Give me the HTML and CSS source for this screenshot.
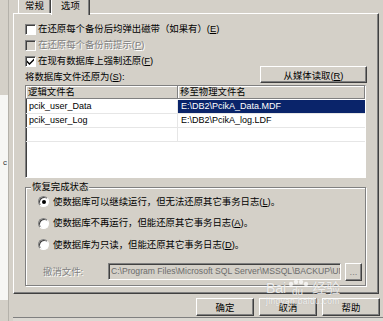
FILE: index.html
```html
<!DOCTYPE html>
<html lang="zh-CN">
<head>
    <meta charset="UTF-8">
    <title>还原数据库 - 选项</title>
    <link rel="stylesheet" href="styles.css">
</head>
<body>
    <div class="screen">
        <div class="side">
            <div class="side-paper">c</div>
        </div>

        <div class="dialog">
            <div class="tabs">
                <div class="tab">常规</div>
                <div class="tab active">选项</div>
            </div>

            <div class="panel">
                <div class="check-row">
                    <span class="check"></span>
                    <span>在还原每个备份后均弹出磁带（如果有）(<u>E</u>)</span>
                </div>
                <div class="check-row disabled">
                    <span class="check"></span>
                    <span>在还原每个备份前提示(<u>P</u>)</span>
                </div>
                <div class="check-row">
                    <span class="check">
                        <svg width="7" height="7" viewBox="0 0 7 7"><path d="M0 2.5 L2.5 5 L7 0.5 L7 2.5 L2.5 7 L0 4.5 Z" fill="#000"/></svg>
                    </span>
                    <span>在现有数据库上强制还原(<u>F</u>)</span>
                </div>

                <div class="restore-row">
                    <span>将数据库文件还原为(<u>S</u>):</span>
                    <button class="btn media-btn">从媒体读取(<u>R</u>)</button>
                </div>

                <div class="file-table">
                    <div class="cell head">逻辑文件名</div>
                    <div class="cell head">移至物理文件名</div>
                    <div class="cell first">pcik_user_Data</div>
                    <div class="cell selected">E:\DB2\PcikA_Data.MDF</div>
                    <div class="cell first">pcik_user_Log</div>
                    <div class="cell">E:\DB2\PcikA_log.LDF</div>
                    <div class="cell first"></div>
                    <div class="cell"></div>
                </div>

                <div class="group">
                    <div class="group-title">恢复完成状态</div>
                    <div class="radio-list">
                        <div class="radio-row">
                            <span class="radio on"></span>
                            <span>使数据库可以继续运行，但无法还原其它事务日志(<u>L</u>)。</span>
                        </div>
                        <div class="radio-row">
                            <span class="radio"></span>
                            <span>使数据库不再运行，但能还原其它事务日志(<u>A</u>)。</span>
                        </div>
                        <div class="radio-row">
                            <span class="radio"></span>
                            <span>使数据库为只读，但能还原其它事务日志(<u>D</u>)。</span>
                        </div>
                    </div>
                    <div class="undo-row">
                        <span class="undo-label">撤消文件:</span>
                        <span class="undo-input">C:\Program Files\Microsoft SQL Server\MSSQL\BACKUP\UNI</span>
                        <button class="btn dots-btn">...</button>
                    </div>
                </div>
            </div>

            <div class="actions">
                <button class="btn">确定</button>
                <button class="btn">取消</button>
                <button class="btn">帮助</button>
            </div>
            <div class="dialog-edge"></div>
        </div>

        <div class="watermark">
            <div class="wm-logo">
                <span>Bai</span>
                <svg width="26" height="16" viewBox="0 0 26 16">
                    <circle cx="5" cy="4" r="2.2" fill="rgba(255,255,255,0.75)"/>
                    <circle cx="10" cy="2" r="2.2" fill="rgba(255,255,255,0.75)"/>
                    <circle cx="15" cy="2" r="2.2" fill="rgba(255,255,255,0.75)"/>
                    <circle cx="20" cy="4" r="2.2" fill="rgba(255,255,255,0.75)"/>
                    <text x="6" y="15" font-size="10" font-family="Liberation Sans, sans-serif" fill="rgba(255,255,255,0.8)">du</text>
                </svg>
                <span>经验</span>
            </div>
            <div class="wm-url">jingyan.baidu.com</div>
        </div>
    </div>
</body>
</html>
```

FILE: styles.css
```css
* {
    box-sizing: border-box;
}

body {
    margin: 0;
    width: 383px;
    height: 321px;
    overflow: hidden;
    background: #d4d0c8;
    font-family: "Liberation Sans", "Noto Sans CJK SC", sans-serif;
    font-size: 9.4px;
    line-height: 12px;
    color: #000;
}

u {
    text-decoration: underline;
}

.screen {
    position: relative;
    display: flex;
    height: 321px;
}

.side {
    width: 9px;
    flex: none;
    padding-top: 95px;
    border-right: 1px solid #b4b1aa;
}

.side-paper {
    height: 205px;
    padding-top: 62px;
    padding-left: 3px;
    background: #f6f6f4;
    font-size: 8px;
    color: #333;
}

.dialog {
    flex: 1;
    padding-left: 4px;
}

/* tabs */
.tabs {
    display: flex;
    height: 13px;
    padding-left: 5px;
}

.tab {
    width: 33px;
    height: 13px;
    border-left: 1px solid #fff;
    border-right: 1px solid #404040;
    box-shadow: inset -1px 0 #808080;
    text-align: center;
}

.tab.active {
    position: relative;
    z-index: 1;
    width: 39px;
    height: 15px;
    background: #d4d0c8;
}

/* main panel */
.panel {
    width: 366px;
    height: 281px;
    padding: 7px 9px 0 11px;
    border-top: 1px solid #fff;
    border-left: 1px solid #fff;
    border-right: 1px solid #404040;
    border-bottom: 1px solid #404040;
    box-shadow: inset -1px -1px #808080;
}

.check-row {
    display: flex;
    align-items: center;
    gap: 2px;
    height: 16px;
}

.check {
    display: flex;
    align-items: center;
    justify-content: center;
    width: 11px;
    height: 11px;
    background: #fff;
    border: 1px solid;
    border-color: #808080 #fff #fff #808080;
    box-shadow: inset 1px 1px #404040;
}

.disabled {
    color: #808080;
    text-shadow: 1px 1px 0 #fff;
}

.disabled .check {
    background: #d4d0c8;
}

.restore-row {
    display: flex;
    justify-content: space-between;
    align-items: flex-end;
    width: 342px;
    height: 17px;
    margin-top: -3px;
}

.btn {
    height: 18px;
    padding: 0;
    background: #d4d0c8;
    border: 1px solid;
    border-color: #fff #404040 #404040 #fff;
    box-shadow: inset -1px -1px #808080;
    font-family: "Liberation Sans", "Noto Sans CJK SC", sans-serif;
    font-size: 9.4px;
    color: #000;
}

.media-btn {
    width: 107px;
    height: 17px;
}

/* file list */
.file-table {
    display: grid;
    grid-template-columns: 152px 1fr;
    grid-auto-rows: 14px;
    align-content: start;
    width: 341px;
    height: 93px;
    margin-top: 2px;
    background: #fff;
    border: 1px solid;
    border-color: #808080 #fff #fff #808080;
    box-shadow: inset 1px 1px #404040;
}

.cell {
    padding-left: 3px;
    line-height: 13px;
    border-bottom: 1px solid #e6e6e6;
    white-space: nowrap;
    overflow: hidden;
    font-size: 9px;
}

.cell.first {
    border-right: 1px solid #e6e6e6;
}

.cell.head {
    height: 13px;
    padding-left: 2px;
    line-height: 12px;
    background: #d4d0c8;
    border-right: 1px solid #808080;
    border-bottom: 1px solid #808080;
    box-shadow: inset 1px 1px #fff;
    font-size: 9.4px;
}

.cell.selected {
    background: #0a246a;
    color: #fff;
}

/* completion state group */
.group {
    width: 341px;
    height: 99px;
    margin-top: 9px;
    padding-left: 12px;
    border: 1px solid #808080;
    box-shadow: inset 1px 1px #fff, 1px 1px #fff;
}

.group-title {
    width: max-content;
    margin: -7px 0 0 -7px;
    padding: 0 1px;
    background: #d4d0c8;
}

.radio-list {
    margin-top: -2px;
}

.radio-row {
    display: flex;
    align-items: center;
    gap: 4px;
    height: 21.5px;
}

.radio {
    position: relative;
    width: 11px;
    height: 11px;
    border-radius: 50%;
    background: #fff;
    border: 1px solid;
    border-color: #808080 #fff #fff #808080;
    box-shadow: inset 1px 1px #404040;
}

.radio.on::after {
    content: "";
    position: absolute;
    left: 3px;
    top: 3px;
    width: 4px;
    height: 4px;
    border-radius: 50%;
    background: #000;
}

.undo-row {
    display: flex;
    align-items: center;
    height: 18px;
    margin-top: 7px;
    padding-left: 5px;
}

.undo-label {
    width: 65px;
    color: #808080;
    text-shadow: 1px 1px 0 #fff;
}

.undo-input {
    width: 233px;
    height: 17px;
    padding-left: 2px;
    line-height: 15px;
    border: 1px solid;
    border-color: #808080 #fff #fff #808080;
    box-shadow: inset 1px 1px #404040;
    font-size: 8.6px;
    color: #6c6c6c;
    white-space: nowrap;
    overflow: hidden;
}

.dots-btn {
    width: 17px;
    margin-left: 4px;
    color: #808080;
}

/* dialog buttons */
.actions {
    display: flex;
    justify-content: flex-end;
    gap: 5px;
    margin-top: 4px;
    padding-right: 3px;
}

.actions .btn {
    width: 58px;
}

.dialog-edge {
    height: 4px;
    margin-top: 1px;
    border-top: 1px solid #808080;
    background: #dcd9d3;
}

/* watermark */
.watermark {
    position: absolute;
    left: 266px;
    top: 280px;
    color: rgba(255, 255, 255, 0.8);
    text-shadow: 0 0 1px rgba(120, 120, 120, 0.4);
}

.wm-logo {
    display: flex;
    align-items: center;
    font-size: 14px;
    line-height: 16px;
}

.wm-url {
    font-size: 8.5px;
    line-height: 10px;
    letter-spacing: 0.3px;
}
```
